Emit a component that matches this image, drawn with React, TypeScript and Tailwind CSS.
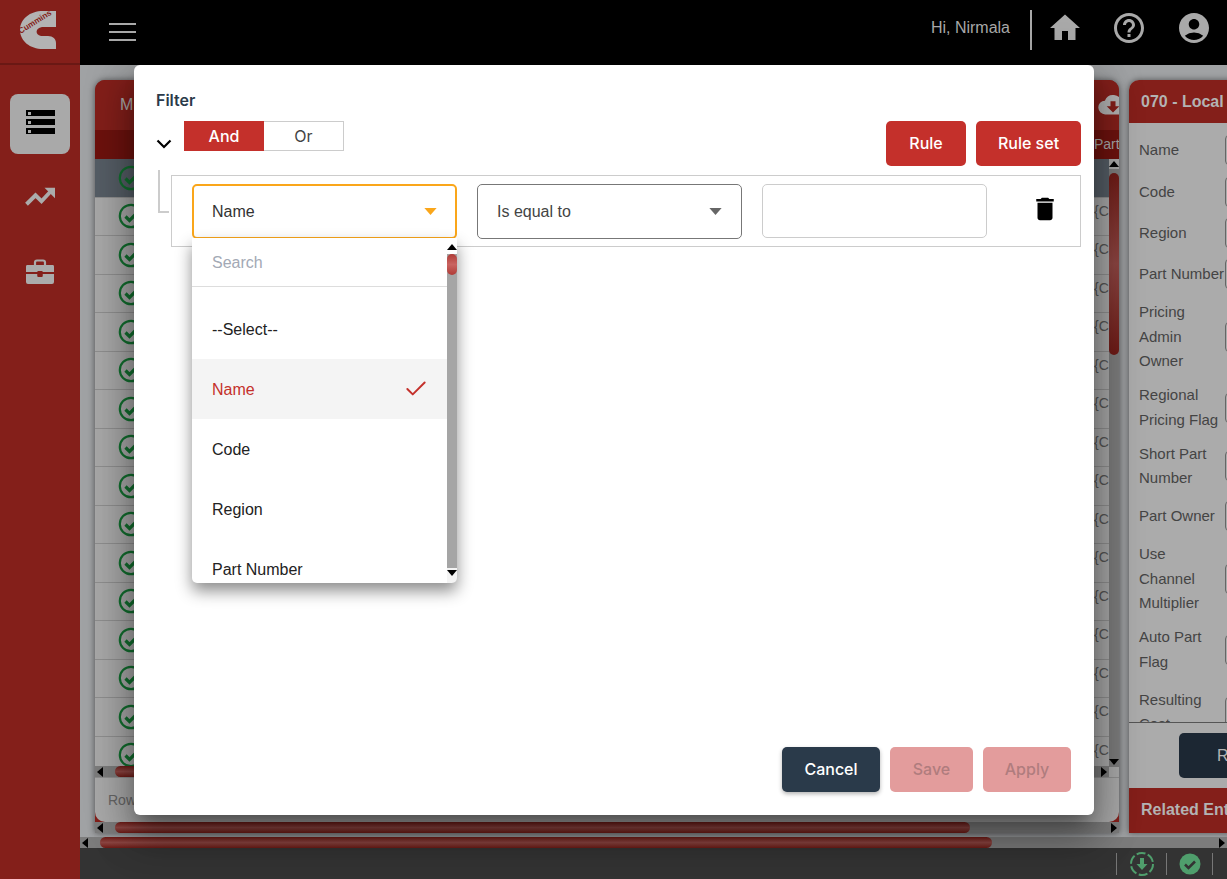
import React from "react";
import { Check } from "lucide-react";
import { MdHome, MdHelpOutline, MdAccountCircle, MdDelete } from "react-icons/md";

const Tri = ({ dir, className = "" }: { dir: "up" | "down" | "left" | "right"; className?: string }) => {
  const pts = { up: "0,8 5,2 10,8", down: "0,2 10,2 5,8", left: "8,0 8,10 2,5", right: "2,0 2,10 8,5" }[dir];
  return (
    <svg viewBox="0 0 10 10" className={`w-[10px] h-[10px] shrink-0 ${className}`}>
      <polygon points={pts} fill="#000" />
    </svg>
  );
};

const GreenCheck = () => (
  <svg viewBox="0 0 26 26" className="w-[26px] h-[26px]">
    <circle cx="13" cy="13" r="11.200" fill="none" stroke="#12702f" strokeWidth="2.200" />
    <path d="M7.500 13.500l4 4L19 10" fill="none" stroke="#12702f" strokeWidth="3.200" />
  </svg>
);

const Logo = () => (
  <svg viewBox="0 0 60 55" className="w-[60px] h-[55px]">
    <path d="M46 7 L46 23 L32 23 C25 24 25 31 31 32 L38 32 C43 32 46 35 46 39 L46 45 L33 45 C20 45 10 37 10 26 C10 15 20 7 33 7 Z" fill="#b3b3b3" />
    <text x="10.500" y="30" fontSize="8.200" fontWeight="700" fill="#841f1a" transform="rotate(-32 10.500 30)" fontFamily="'Liberation Sans', sans-serif">Cummins</text>
  </svg>
);

const Hbar = ({ thumbLeft, thumbWidth }: { thumbLeft: number; thumbWidth: number }) => (
  <div className="relative h-[11px] bg-[#7c7c7c] flex justify-between items-center shrink-0">
    <Tri dir="left" />
    <Tri dir="right" />
    <div
      className="absolute top-0 bottom-0 rounded-full bg-gradient-to-b from-[#6e1a16] via-[#8c4542] to-[#6e1a16]"
      style={{ left: thumbLeft, width: thumbWidth }}
    />
  </div>
);

const labels: { text: string[]; mb: string }[] = [
  { text: ["Name"], mb: "mb-[17.500px]" },
  { text: ["Code"], mb: "mb-[16.500px]" },
  { text: ["Region"], mb: "mb-[16.500px]" },
  { text: ["Part Number"], mb: "mb-[13.500px]" },
  { text: ["Pricing", "Admin", "Owner"], mb: "mb-[9.500px]" },
  { text: ["Regional", "Pricing Flag"], mb: "mb-[9.500px]" },
  { text: ["Short Part", "Number"], mb: "mb-[13.500px]" },
  { text: ["Part Owner"], mb: "mb-[13.500px]" },
  { text: ["Use", "Channel", "Multiplier"], mb: "mb-[9.500px]" },
  { text: ["Auto Part", "Flag"], mb: "mb-[13.500px]" },
  { text: ["Resulting", "Cost"], mb: "mb-0" },
];

const options = ["--Select--", "Name", "Code", "Region", "Part Number"];

export default function App() {
  return (
    <div
      className="relative w-[1227px] h-[879px] overflow-hidden flex bg-[#8a8a8a]"
      style={{ fontFamily: "'Liberation Sans', sans-serif" }}
    >
      {/* Sidebar */}
      <aside className="w-[80px] shrink-0 bg-[#841f1a] flex flex-col items-center">
        <div className="w-full h-[65px] border-b-2 border-[#6a1814] flex items-center justify-center">
          <Logo />
        </div>
        <div className="mt-[29px] w-[60px] h-[60px] rounded-[8px] bg-[#a9a9a9] flex flex-col items-center justify-center gap-[3px] pb-[4px]">
          {[0, 1, 2].map((i) => (
            <div key={i} className="w-[29px] h-[6px] bg-black flex items-center pl-[2px]">
              <div className="w-[3px] h-[3px] bg-[#a9a9a9]" />
            </div>
          ))}
        </div>
        <svg viewBox="0 0 24 24" className="mt-[24px] w-[36px] h-[36px]">
          <path d="M3 17.500l6-6 4 4 7-7.500" fill="none" stroke="#ababab" strokeWidth="2.600" />
          <path d="M15 6.500h7v7z" fill="#ababab" />
        </svg>
        <svg viewBox="0 0 30 28" className="mt-[44px] w-[30px] h-[28px]">
          <path d="M10 7V4.500A2 2 0 0 1 12 2.500h6a2 2 0 0 1 2 2V7" fill="none" stroke="#ababab" strokeWidth="2.200" />
          <path d="M2 7h26a1.500 1.500 0 0 1 1 1.500V14H1V8.500A1.500 1.500 0 0 1 2 7z" fill="#ababab" />
          <path d="M1 16h11.500v3h5v-3H29v8a2 2 0 0 1-2 2H3a2 2 0 0 1-2-2z" fill="#ababab" />
          <rect x="12.500" y="13" width="5" height="5" fill="#841f1a" />
        </svg>
      </aside>

      {/* Right of the sidebar */}
      <div className="flex-1 min-w-0 flex flex-col">
        <header className="h-[65px] shrink-0 bg-black flex items-center pl-[29px] pr-[15px] text-[#a9a9a9]">
          <div className="w-[27px] flex flex-col gap-[6px] -mt-[1px]">
            <div className="h-[2px] bg-[#a9a9a9]" />
            <div className="h-[2px] bg-[#a9a9a9]" />
            <div className="h-[2px] bg-[#a9a9a9]" />
          </div>
          <div className="flex-1" />
          <span className="text-[16px] mr-[20px] -mt-[10px]">Hi, Nirmala</span>
          <div className="w-[2px] h-[40px] bg-[#a9a9a9] mr-[15px] -mt-[5px]" />
          <MdHome className="w-[36px] h-[36px] mr-[28px] -mt-[10px]" />
          <MdHelpOutline className="w-[36px] h-[36px] mr-[29px] -mt-[10px]" />
          <MdAccountCircle className="w-[36px] h-[36px] -mt-[10px]" />
        </header>

        <main className="flex-1 min-h-0 flex flex-col bg-[#a0a2a4] overflow-hidden">
          <div className="flex-1 min-h-0 flex pl-[15px] pt-[15px] gap-[10px]">
            {/* Grid panel */}
            <section className="w-[1024px] shrink-0 flex flex-col h-[753px] bg-[#841f1a] rounded-t-[10px] overflow-hidden shadow-[0_0_6px_rgba(0,0,0,0.5)] text-[#555]">
              <div className="h-[50px] shrink-0 bg-[#841f1a] flex items-center justify-between pl-[25px] text-[#ababab] text-[16px]">
                <span>M</span>
                <svg viewBox="0 0 24 24" className="w-[30px] h-[30px] -mr-[9px]">
                  <path d="M19 10a7 7 0 0 0-13.500-1.500A5.500 5.500 0 0 0 6 19.500h12.500a4.800 4.800 0 0 0 .5-9.500z" fill="#b3b3b3" />
                  <path d="M10 9h4v4h3l-5 5-5-5h3z" fill="#841f1a" />
                </svg>
              </div>
              <div className="h-[29px] shrink-0 bg-[#6e120e] flex justify-end items-center text-[14px] text-[#a9a9a9]">
                <span className="w-[25px] overflow-hidden whitespace-nowrap">Part</span>
              </div>
              <div className="flex-1 min-h-0 flex bg-[#a9a9a9]">
                <div className="flex-1 min-w-0 flex flex-col">
                  <div className="flex-1 min-h-0 overflow-hidden">
                    {Array.from({ length: 16 }).map((_, i) => (
                      <div
                        key={i}
                        className={`h-[38.500px] flex items-center justify-between pl-[23px] border-b border-[#8f8f8f] ${i === 0 ? "bg-[#565e66]" : "bg-[#a9a9a9]"}`}
                      >
                        <GreenCheck />
                        {i > 0 && <span className="text-[14px] w-[15px] overflow-hidden mb-[10px]">{"{C"}</span>}
                      </div>
                    ))}
                  </div>
                  <Hbar thumbLeft={20} thumbWidth={300} />
                </div>
                <div className="w-[10px] shrink-0 bg-[#7c7c7c] flex flex-col items-center h-[608px] relative">
                  <Tri dir="up" className="bg-[#a9a9a9]" />
                  <div className="absolute top-[14px] left-0 w-[10px] h-[182px] rounded-full bg-gradient-to-b from-[#6e1a16] via-[#8c4542] to-[#6e1a16]" />
                  <div className="flex-1" />
                  <Tri dir="down" />
                </div>
              </div>
              <div className="h-[45px] shrink-0 flex items-center pl-[13px] text-[14px] border-t border-[#8f8f8f] text-[#666] bg-[#a9a9a9] rounded-b-[10px]">Row</div>
              <Hbar thumbLeft={20} thumbWidth={855} />
            </section>

            {/* Detail panel */}
            <section className="w-[200px] shrink-0 h-[753px] flex flex-col bg-[#ababab] rounded-t-[10px] overflow-hidden shadow-[0_0_6px_rgba(0,0,0,0.5)] text-[#444]">
              <div className="h-[43px] shrink-0 bg-[#841f1a] flex items-center pl-[12px] text-[16px] font-bold text-[#b3b3b3] whitespace-nowrap">
                070 - Local
              </div>
              <div className="h-[600px] shrink-0 overflow-hidden pt-[15px] pl-[10px] text-[15px] leading-[24.500px] border-b border-[#555]">
                {labels.map((l) => (
                  <div key={l.text.join()} className={`relative w-[86px] ${l.mb}`}>
                    {l.text.map((t) => (
                      <div key={t} className="whitespace-nowrap">{t}</div>
                    ))}
                    <div className="absolute left-[86px] top-1/2 -translate-y-1/2 w-[20px] h-[30px] border border-[#666] rounded-[4px]" />
                  </div>
                ))}
              </div>
              <div className="h-[65px] shrink-0 pt-[10px] pl-[50px]">
                <div className="h-[45px] w-[100px] rounded-[5px] bg-[#1c2733] text-[#b3b3b3] text-[16px] flex items-center pl-[38px]">R</div>
              </div>
              <div className="flex-1 bg-[#841f1a] flex items-center pl-[12px] pb-[1px] text-[16px] font-bold text-[#b3b3b3] whitespace-nowrap">Related Entities</div>
            </section>
          </div>
          <Hbar thumbLeft={20} thumbWidth={892} />
        </main>

        <footer className="h-[31px] shrink-0 bg-[#333333] flex items-center justify-end pr-[14px]">
          <div className="w-px h-[22px] bg-[#777] mr-[12px]" />
          <svg viewBox="0 0 26 26" className="w-[26px] h-[26px] mr-[11px]">
            <circle cx="13" cy="13" r="11" fill="none" stroke="#4f9e6c" strokeWidth="2" strokeDasharray="9 2.500" />
            <path d="M11 7h4v6h3.500L13 19l-5.500-6H11z" fill="#4f9e6c" />
          </svg>
          <div className="w-px h-[22px] bg-[#777] mr-[12px]" />
          <svg viewBox="0 0 22 22" className="w-[22px] h-[22px] mr-[11px]">
            <circle cx="11" cy="11" r="10.500" fill="#4f9e6c" />
            <path d="M6 11.500l3.500 3.500L16 8.500" fill="none" stroke="#333" strokeWidth="2.500" />
          </svg>
          <div className="w-px h-[22px] bg-[#777]" />
        </footer>
      </div>

      {/* Modal */}
      <div className="absolute left-[134px] top-[65px] w-[960px] h-[750px] bg-white rounded-[6px] shadow-[0_11px_15px_-7px_rgba(0,0,0,0.3),0_24px_38px_3px_rgba(0,0,0,0.25),0_9px_46px_8px_rgba(0,0,0,0.2)] px-[22px] pt-[26px] flex flex-col text-[#333]">
        <div className="text-[16px] font-semibold font-['Inter'] text-[#2b3a4a] leading-[18px]">Filter</div>
        <div className="mt-[12px] flex items-start">
          <svg viewBox="0 0 16 10" className="mt-[18px] w-[16px] h-[10px] shrink-0">
            <path d="M1.500 1.500L8 8l6.500-6.500" fill="none" stroke="#000" strokeWidth="2.200" />
          </svg>
          <div className="ml-[12px] flex h-[30px] w-[160px] text-[16px] font-['Inter']">
            <div className="w-[80px] bg-[#c4302b] text-white font-medium flex items-center justify-center">And</div>
            <div className="w-[80px] border border-[#ccc] border-l-0 flex items-center justify-center text-[#444]">Or</div>
          </div>
          <div className="flex-1" />
          <div className="flex gap-[10px] -mr-[9px] font-['Inter']">
            <button className="w-[80px] h-[45px] rounded-[5px] bg-[#c4302b] text-white text-[16px] font-medium pb-[1px]">Rule</button>
            <button className="w-[105px] h-[45px] rounded-[5px] bg-[#c4302b] text-white text-[16px] font-medium pb-[1px]">Rule set</button>
          </div>
        </div>

        <div className="relative -mr-[9px] ml-[15px] mt-[9px] h-[72px] border border-[#ccc] flex items-center pl-[20px]">
          <div className="absolute -left-[14px] -top-[6px] w-[11px] h-[43px] border-l-2 border-b-2 border-[#ccc]" />
          <div className="w-[265px] h-[55px] rounded-[5px] border-2 border-[#faa61a] bg-white flex items-center justify-between pl-[18px] pr-[18px] text-[16px] text-[#333]">
            <span className="pt-[1px]">Name</span>
            <svg viewBox="0 0 14 8" className="w-[13px] h-[7px]"><polygon points="0,0 14,0 7,8" fill="#faa61a" /></svg>
          </div>
          <div className="ml-[20px] w-[265px] h-[55px] rounded-[5px] border border-[#777] flex items-center justify-between pl-[19px] pr-[19px] text-[16px] text-[#444]">
            <span className="pt-[1px]">Is equal to</span>
            <svg viewBox="0 0 14 8" className="w-[13px] h-[7px]"><polygon points="0,0 14,0 7,8" fill="#666" /></svg>
          </div>
          <div className="ml-[20px] w-[225px] h-[54px] rounded-[5px] border border-[#ccc]" />
          <MdDelete className="ml-[43px] -mt-[4px] w-[30px] h-[30px] text-black" />

          {/* Dropdown */}
          <div className="absolute z-10 left-[20px] top-[62px] w-[265px] h-[345px] bg-white rounded-b-[5px] shadow-[0_8px_16px_rgba(0,0,0,0.45)] flex overflow-hidden">
            <div className="flex-1 min-w-0 overflow-hidden">
              <div className="h-[49px] border-b border-[#ddd] flex items-center pl-[20px] pt-[1px] text-[16px] text-[#a3a9b5]">Search</div>
              <div className="pt-[12px]">
                {options.map((o) => (
                  <div
                    key={o}
                    className={`h-[60px] shrink-0 flex items-center justify-between pl-[20px] pr-[18px] text-[16px] ${o === "Name" ? "bg-[#f4f4f4] text-[#c4302b]" : "text-[#222]"}`}
                  >
                    <span className="pt-[1px]">{o}</span>
                    {o === "Name" && <Check className="w-[26px] h-[26px] text-[#c4302b]" strokeWidth={1.800} />}
                  </div>
                ))}
              </div>
            </div>
            <div className="relative w-[10px] shrink-0 bg-[#a5a5a5] flex flex-col">
              <div className="h-[16px] bg-white flex items-end shrink-0"><Tri dir="up" className="mb-[2px]" /></div>
              <div className="absolute top-[16px] left-0 w-[10px] h-[21px] rounded-full bg-gradient-to-b from-[#b03a36] via-[#c96461] to-[#b03a36]" />
              <div className="flex-1" />
              <div className="h-[15px] bg-[#f4f4f4] flex items-start shrink-0"><Tri dir="down" /></div>
            </div>
          </div>
        </div>

        <div className="flex-1" />
        <div className="flex justify-end gap-[10px] mb-[23px] mr-[1px] font-['Inter']">
          <button className="w-[98px] h-[45px] rounded-[5px] bg-[#2a3a4a] text-white text-[16px] font-medium pb-[1px] shadow-[0_2px_4px_rgba(0,0,0,0.3)]">Cancel</button>
          <button className="w-[83px] h-[45px] rounded-[5px] bg-[#e39c9c] text-[#b07c7e] text-[16px] font-medium pb-[1px]">Save</button>
          <button className="w-[88px] h-[45px] rounded-[5px] bg-[#e39c9c] text-[#b07c7e] text-[16px] font-medium pb-[1px]">Apply</button>
        </div>
      </div>
    </div>
  );
}
